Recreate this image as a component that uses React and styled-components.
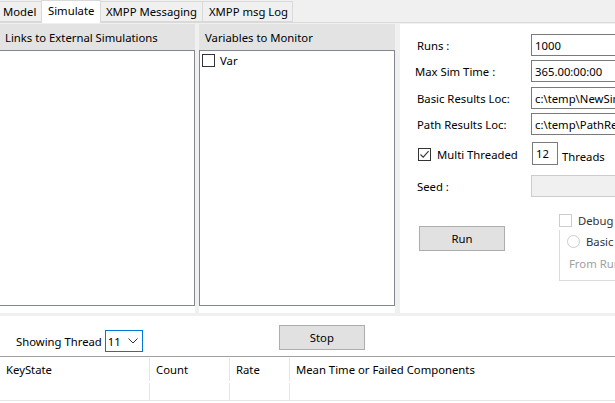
import React from "react";
import styled, { createGlobalStyle } from "styled-components";

const Global = createGlobalStyle`
  html, body { margin: 0; padding: 0; background: #ffffff; }
  body { font-family: "Noto Sans", "Open Sans", sans-serif; font-size: 11.3px; color: #000; }
  * { box-sizing: border-box; }
`;

const Window = styled.div`
  width: 615px;
  height: 403px;
  overflow: hidden;
  background: #ffffff;
  display: flex;
  flex-direction: column;
`;

const TabStrip = styled.div`
  height: 23px;
  flex: none;
  display: flex;
  align-items: flex-end;
  background: #f0f0f0;
  border-bottom: 1px solid #d9d9d9;
`;

const Tab = styled.div`
  height: ${(p) => (p.$active ? "23px" : "21px")};
  margin-bottom: ${(p) => (p.$active ? "-1px" : "0")};
  width: ${(p) => p.$w}px;
  background: ${(p) => (p.$active ? "#ffffff" : "#f0f0f0")};
  border: 1px solid #d9d9d9;
  border-bottom: ${(p) => (p.$active ? "none" : "1px solid #d9d9d9")};
  margin-left: ${(p) => p.$ml || 0}px;
  display: flex;
  align-items: center;
  padding-left: ${(p) => p.$pl}px;
  padding-bottom: ${(p) => (p.$active ? "3px" : "0")};
  white-space: nowrap;
  overflow: hidden;
`;

const SplitArea = styled.div`
  height: 293px;
  flex: none;
  background: #f0f0f0;
  display: flex;
  padding: 1px 0 3px 0;
`;

const ListPanel = styled.div`
  width: ${(p) => p.$w}px;
  margin-left: ${(p) => p.$ml}px;
  background: #ffffff;
  display: flex;
  flex-direction: column;
  padding-bottom: 7px;
`;

const ColumnHeader = styled.div`
  height: 26px;
  flex: none;
  background: #e3e3e3;
  display: flex;
  align-items: center;
  padding-left: ${(p) => p.$pl}px;
  white-space: nowrap;
  overflow: hidden;
`;

const ListBox = styled.div`
  flex: 1;
  background: #ffffff;
  border: 1px solid #828790;
  width: ${(p) => p.$w}px;
  margin-left: ${(p) => p.$ml || 0}px;
  padding: 2px 0 0 2px;
`;

const CheckRow = styled.label`
  display: flex;
  align-items: center;
  gap: ${(p) => p.$gap ?? 5}px;
  height: 14px;
  width: ${(p) => (p.$w ? `${p.$w}px` : "auto")};
  margin-left: ${(p) => p.$ml || 0}px;
  margin-top: ${(p) => p.$mt || 0}px;
  color: ${(p) => (p.$disabled ? "#333333" : "#000")};
`;

const Box = styled.span`
  width: 13px;
  height: 13px;
  flex: none;
  border: 1px solid ${(p) => (p.$disabled ? "#cccccc" : "#333333")};
  background: #ffffff;
  display: inline-flex;
  align-items: center;
  justify-content: center;
`;

const SettingsPanel = styled.div`
  flex: 1;
  margin-left: 5px;
  background: #ffffff;
  display: flex;
  flex-direction: column;
  padding: 10px 0 0 17px;
`;

const FieldRow = styled.div`
  display: flex;
  align-items: center;
  height: 22px;
  margin-top: ${(p) => p.$mt ?? 0}px;
  margin-bottom: ${(p) => p.$mb ?? 4}px;
`;

const Label = styled.div`
  width: ${(p) => p.$w || 114}px;
  margin-left: ${(p) => p.$ml || 0}px;
  white-space: nowrap;
  flex: none;
`;

const TextBox = styled.div`
  height: 22px;
  width: 100px;
  flex: none;
  border: 1px solid ${(p) => (p.$disabled ? "#cccccc" : "#7a7a7a")};
  background: ${(p) => (p.$disabled ? "#f0f0f0" : "#ffffff")};
  padding-left: 3px;
  display: flex;
  align-items: center;
  white-space: nowrap;
  overflow: hidden;
`;

const SmallBox = styled(TextBox)`
  width: 26px;
  height: 23px;
  margin-left: 9px;
`;

const ThreadRow = styled.div`
  display: flex;
  align-items: center;
  height: 23px;
  margin-top: 1px;
`;

const ThreadsLabel = styled.span`
  margin-left: 4px;
  margin-top: 6px;
`;

const Button = styled.button`
  width: ${(p) => p.$w}px;
  height: 25px;
  background: #e1e1e1;
  border: 1px solid #adadad;
  font-family: inherit;
  font-size: 11.3px;
  color: #000;
  padding: 0;
  display: flex;
  align-items: center;
  justify-content: center;
`;

const LowerRow = styled.div`
  display: flex;
  margin-top: 16px;
`;

const RunCol = styled.div`
  padding-top: 13px;
  padding-left: 2px;
`;

const OptionsCol = styled.div`
  margin-left: 54px;
  display: flex;
  flex-direction: column;
`;

const Group = styled.div`
  margin-top: 3px;
  width: 80px;
  height: 51px;
  border-left: 1px solid #dcdcdc;
  border-bottom: 1px solid #dcdcdc;
  padding: 4px 0 0 7px;
  display: flex;
  flex-direction: column;
`;

const Radio = styled.span`
  width: 13px;
  height: 13px;
  border-radius: 50%;
  border: 1px solid #cccccc;
  background: #fff;
  flex: none;
`;

const GrayText = styled.div`
  color: #a0a0a0;
  margin-top: 8px;
  margin-left: 2px;
  white-space: nowrap;
`;

const Bottom = styled.div`
  flex: 1;
  background: #ffffff;
  display: flex;
  flex-direction: column;
`;

const ControlBar = styled.div`
  height: 40px;
  display: flex;
  align-items: flex-start;
`;

const ShowLabel = styled.div`
  margin-left: 16px;
  margin-top: 18px;
  white-space: nowrap;
`;

const Combo = styled.div`
  margin-left: 3px;
  margin-top: 14px;
  width: 38px;
  height: 22px;
  border: 1px solid #0078d7;
  display: flex;
  align-items: center;
  justify-content: space-between;
  padding: 0 4px 0 2px;
`;

const StopWrap = styled.div`
  margin-left: 136px;
  margin-top: 9px;
`;

const Grid = styled.div`
  border-top: 1px solid #a0a0a0;
  display: flex;
  flex-direction: column;
`;

const GridRow = styled.div`
  display: flex;
  height: ${(p) => p.$h}px;
  border-bottom: ${(p) => (p.$line ? "1px solid #e5e5e5" : "none")};
`;

const Cell = styled.div`
  width: ${(p) => (p.$w ? `${p.$w}px` : "auto")};
  flex: ${(p) => (p.$w ? "none" : "1")};
  padding-left: 6px;
  display: flex;
  align-items: center;
  border-right: ${(p) => (p.$sep ? "1px solid #e5e5e5" : "none")};
  margin: ${(p) => p.$m || "0"};
  white-space: nowrap;
`;

const Check = () => (
  <svg width="11" height="11" viewBox="0 0 11 11">
    <path d="M1.5 5.5 L4.2 8.2 L9.6 2.2" fill="none" stroke="#333" strokeWidth="1.1" />
  </svg>
);

const Chevron = () => (
  <svg width="10" height="6" viewBox="0 0 10 6">
    <path d="M0.5 0.5 L5 5 L9.5 0.5" fill="none" stroke="#333" strokeWidth="1" />
  </svg>
);

export default function App() {
  return (
    <Window>
      <Global />
      <TabStrip>
        <Tab $w={44} $ml={-2} $pl={4}>Model</Tab>
        <Tab $active $w={60} $ml={-1} $pl={6}>Simulate</Tab>
        <Tab $w={103} $ml={-1} $pl={5}>XMPP Messaging</Tab>
        <Tab $w={91} $ml={-1} $pl={6}>XMPP msg Log</Tab>
      </TabStrip>
      <SplitArea>
        <ListPanel $w={196} $ml={0}>
          <ColumnHeader $pl={5}>Links to External Simulations</ColumnHeader>
          <ListBox $w={196} $ml={-1} />
        </ListPanel>
        <ListPanel $w={197} $ml={4}>
          <ColumnHeader $pl={6}>Variables to Monitor</ColumnHeader>
          <ListBox $w={196}>
            <CheckRow>
              <Box />
              <span>Var</span>
            </CheckRow>
          </ListBox>
        </ListPanel>
        <SettingsPanel>
          <FieldRow>
            <Label>Runs :</Label>
            <TextBox>1000</TextBox>
          </FieldRow>
          <FieldRow>
            <Label $ml={-2} $w={116}>Max Sim Time :</Label>
            <TextBox>365.00:00:00</TextBox>
          </FieldRow>
          <FieldRow $mt={1}>
            <Label>Basic Results Loc:</Label>
            <TextBox>c:\temp\NewSimResults</TextBox>
          </FieldRow>
          <FieldRow $mb={6}>
            <Label>Path Results Loc:</Label>
            <TextBox>c:\temp\PathResults</TextBox>
          </FieldRow>
          <ThreadRow>
            <CheckRow $w={105} $gap={6} $ml={1} $mt={1}>
              <Box>
                <Check />
              </Box>
              <span>Multi Threaded</span>
            </CheckRow>
            <SmallBox>12</SmallBox>
            <ThreadsLabel>Threads</ThreadsLabel>
          </ThreadRow>
          <FieldRow $mt={10} $mb={0}>
            <Label>Seed :</Label>
            <TextBox $disabled />
          </FieldRow>
          <LowerRow>
            <RunCol>
              <Button $w={86}>Run</Button>
            </RunCol>
            <OptionsCol>
              <CheckRow $disabled $gap={6}>
                <Box $disabled />
                <span>Debug</span>
              </CheckRow>
              <Group>
                <CheckRow $disabled $gap={6}>
                  <Radio />
                  <span>Basic</span>
                </CheckRow>
                <GrayText>From Run</GrayText>
              </Group>
            </OptionsCol>
          </LowerRow>
        </SettingsPanel>
      </SplitArea>
      <Bottom>
        <ControlBar>
          <ShowLabel>Showing Thread</ShowLabel>
          <Combo>
            <span>11</span>
            <Chevron />
          </Combo>
          <StopWrap>
            <Button $w={86}>Stop</Button>
          </StopWrap>
        </ControlBar>
        <Grid>
          <GridRow $h={26}>
            <Cell $w={150} $sep $m="1px 0 2px 0">KeyState</Cell>
            <Cell $w={80} $sep $m="1px 0 2px 0">Count</Cell>
            <Cell $w={60} $sep $m="1px 0 2px 0">Rate</Cell>
            <Cell $m="1px 0 2px 0">Mean Time or Failed Components</Cell>
          </GridRow>
          <GridRow $h={18} $line>
            <Cell $w={150} $sep />
            <Cell $w={80} $sep />
            <Cell $w={60} $sep />
            <Cell />
          </GridRow>
        </Grid>
      </Bottom>
    </Window>
  );
}
